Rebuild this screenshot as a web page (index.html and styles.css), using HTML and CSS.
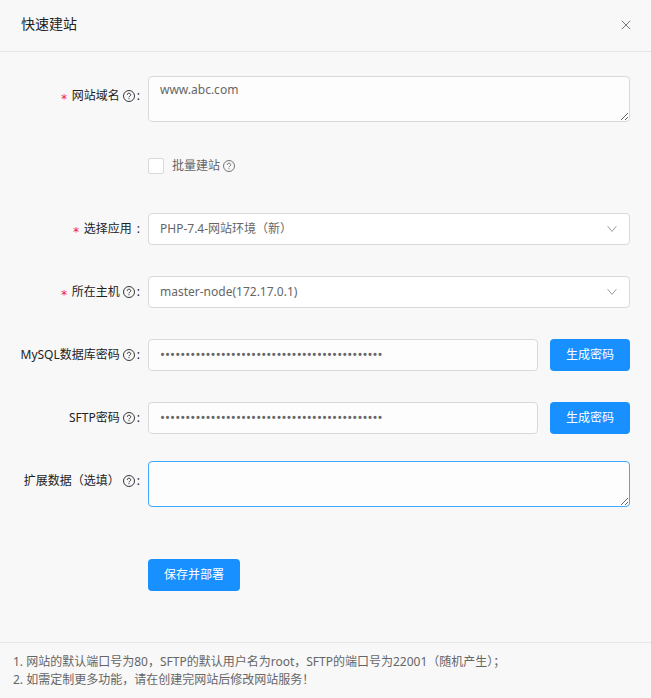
FILE: index.html
```
<!DOCTYPE html>
<html lang="zh-CN">
<head>
<meta charset="utf-8">
<meta name="viewport" content="width=device-width, initial-scale=1">
<title>快速建站</title>
<link rel="stylesheet" href="styles.css">
</head>
<body>
<svg class="defs" aria-hidden="true">
  <symbol id="help" viewBox="0 0 12 12">
    <circle cx="6" cy="6" r="5.5"/>
    <path d="M4.3 4.8a1.7 1.6 0 1 1 2.5 1.4c-.6.3-.8.6-.8 1.1M6 8.2v1"/>
  </symbol>
  <symbol id="down" viewBox="0 0 10 8"><path d="M.7 1.2 5 6.4l4.3-5.2"/></symbol>
</svg>
<header class="header">
  <h1 class="title">快速建站</h1>
  <button class="close" type="button" aria-label="关闭"><svg viewBox="0 0 10 10"><path d="m.8.8 8.4 8.4M9.2.8.8 9.2"/></svg></button>
</header>
<form class="form">
  <div class="row row-tall">
    <label class="label required" for="domain">网站域名<svg class="help"><use href="#help"/></svg><span class="colon">:</span></label>
    <div class="control"><textarea class="field area" id="domain">www.abc.com</textarea></div>
  </div>
  <div class="row">
    <div class="control control-offset">
      <label class="check"><input class="box" type="checkbox">批量建站<svg class="help"><use href="#help"/></svg></label>
    </div>
  </div>
  <div class="row">
    <label class="label required" for="app">选择应用<span class="colon colon-wide">:</span></label>
    <div class="control">
      <select class="field" id="app"><option>PHP-7.4-网站环境（新）</option></select>
      <svg class="arrow"><use href="#down"/></svg>
    </div>
  </div>
  <div class="row">
    <label class="label required" for="host">所在主机<svg class="help"><use href="#help"/></svg><span class="colon">:</span></label>
    <div class="control">
      <select class="field" id="host"><option>master-node(172.17.0.1)</option></select>
      <svg class="arrow"><use href="#down"/></svg>
    </div>
  </div>
  <div class="row">
    <label class="label" for="mysql">MySQL数据库密码<svg class="help"><use href="#help"/></svg><span class="colon">:</span></label>
    <div class="control">
      <input class="field password" id="mysql" type="password" value="abcdefghijklmnopqrstuvabcdefghijklmnopqrstuv">
      <button class="button" type="button">生成密码</button>
    </div>
  </div>
  <div class="row">
    <label class="label" for="sftp">SFTP密码<svg class="help"><use href="#help"/></svg><span class="colon">:</span></label>
    <div class="control">
      <input class="field password" id="sftp" type="password" value="abcdefghijklmnopqrstuvabcdefghijklmnopqrstuv">
      <button class="button" type="button">生成密码</button>
    </div>
  </div>
  <div class="row row-tall">
    <label class="label" for="extra">扩展数据（选填）<svg class="help"><use href="#help"/></svg><span class="colon">:</span></label>
    <div class="control"><textarea class="field area active" id="extra"></textarea></div>
  </div>
  <div class="row submit">
    <div class="control control-offset"><button class="button" type="submit">保存并部署</button></div>
  </div>
</form>
<footer class="notes">
  <p>1. 网站的默认端口号为80，SFTP的默认用户名为root，SFTP的端口号为22001（随机产生）；</p>
  <p>2. 如需定制更多功能，请在创建完网站后修改网站服务！</p>
</footer>
</body>
</html>
```
FILE: styles.css
```
* { box-sizing: border-box; }

body {
  margin: 0;
  background: #f8f8f8;
  color: #666;
  font: 12px/18px "Noto Sans", "Noto Sans CJK SC", sans-serif;
}

svg { fill: none; stroke: currentColor; }
.defs { display: none; }

.header {
  display: flex;
  align-items: center;
  justify-content: space-between;
  height: 52px;
  padding: 0 20px 2px 21px;
  border-bottom: 1px solid #e5e5e5;
}

.title {
  margin: 0;
  padding-bottom: 2px;
  color: #222;
  font-size: 14px;
  font-weight: 400;
  line-height: 20px;
}

.close {
  display: flex;
  padding: 0;
  border: 0;
  background: none;
  color: #777;
}
.close svg { width: 10px; height: 10px; }

.form {
  display: grid;
  gap: 23px;
  padding: 24px 21px 47px 0;
}

.row {
  display: grid;
  grid-template-columns: 140px 1fr;
  column-gap: 8px;
  min-height: 40px;
}
.row-tall { min-height: 47px; }
.submit { margin-top: 24px; }

.label {
  display: flex;
  align-items: center;
  justify-content: flex-end;
  height: 40px;
  color: #222;
  white-space: nowrap;
}
.required::before {
  content: "*";
  margin-right: 4px;
  padding-top: 5px;
  color: #f5222d;
  font-family: "DejaVu Sans Mono", monospace;
}

.help {
  flex: none;
  width: 12px;
  height: 12px;
  margin-left: 3px;
  stroke-width: .9;
}
.colon { margin-left: 2px; }
.colon-wide { margin-left: 5px; }

.control {
  position: relative;
  display: flex;
  align-items: center;
  gap: 12px;
  min-width: 0;
}
.control-offset { grid-column: 2; }
.row-tall .control { align-items: flex-start; }

.field {
  flex: 1;
  min-width: 0;
  height: 32px;
  margin: 0;
  padding: 4px 11px;
  border: 1px solid #d9d9d9;
  border-radius: 4px;
  outline: 0;
  background: #fdfdfd;
  color: #666;
  font: inherit;
  appearance: none;
}
select.field { background: #fff; }
.area {
  height: 46px;
  resize: vertical;
}
.active { border-color: #40a9ff; }
.password { font-family: Roboto, sans-serif; font-size: 15px; }

.arrow {
  position: absolute;
  top: 16px;
  right: 13px;
  width: 10px;
  height: 8px;
  color: #999;
  pointer-events: none;
}

.check {
  display: flex;
  align-items: center;
}
.box {
  width: 16px;
  height: 16px;
  margin: 0 8px 0 0;
  border: 1px solid #d9d9d9;
  border-radius: 2px;
  background: #fff;
  appearance: none;
}

.button {
  height: 32px;
  padding: 0 16px;
  border: 0;
  border-radius: 4px;
  background: #1890ff;
  color: #fff;
  font: inherit;
}

.notes {
  padding: 10px 13px;
  border-top: 1px solid #e5e5e5;
}
.notes p { margin: 0; }
```
